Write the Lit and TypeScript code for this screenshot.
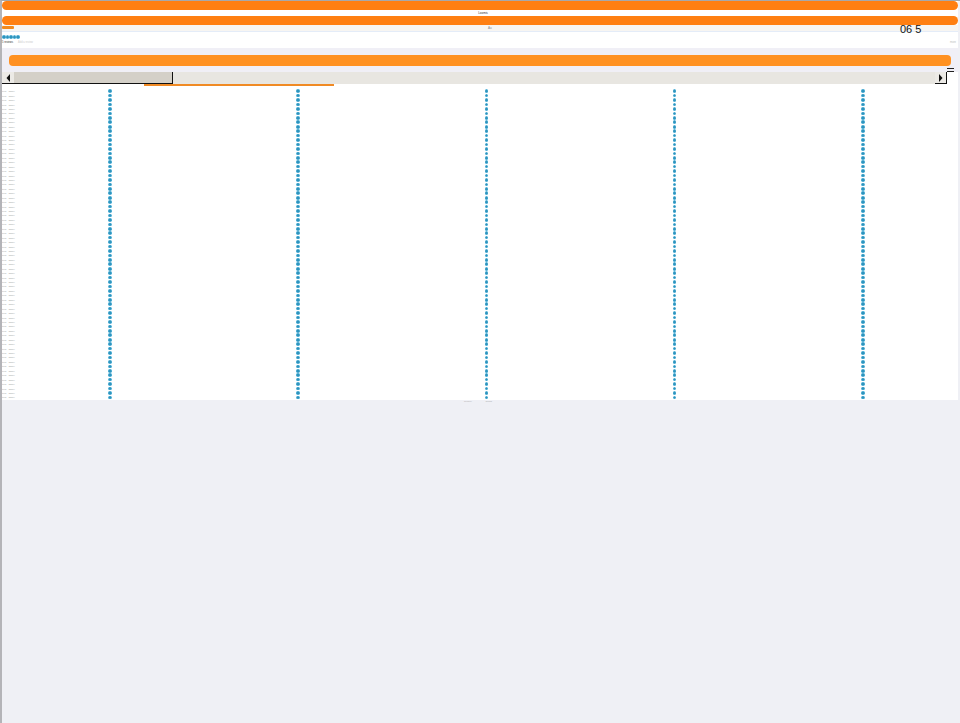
import { LitElement, html, css } from "lit";
import { customElement } from "lit/decorators.js";

const ROWS = Array.from({ length: 70 }, (_, i) => i);
const COLS = [0, 1, 2, 3, 4];

@customElement("app-root")
export class AppRoot extends LitElement {
  static styles = css`
    :host { display: block; width: 960px; height: 723px; background: #eff0f5; font-family: "Liberation Sans", Arial, sans-serif; overflow: hidden; position: relative; }
    .frame { height: 723px; border-left: 2px solid #b4b4b8; border-top: 1px solid #a8a8a8; box-sizing: border-box; width: 960px; }
    .page { width: 956px; height: 399px; background: #fff; display: flex; flex-direction: column; position: relative; }
    .bar { height: 9px; background: #ff7f11; border-radius: 5px; flex: none; }
    .caption { height: 6px; flex: none; display: flex; justify-content: center; align-items: center; font-size: 3px; color: #333; padding-left: 6px; }
    .sub { height: 6px; flex: none; background: #f7f5f2; display: flex; position: relative; align-items: center; border-bottom: 1px solid #e4ecf8; box-sizing: content-box; }
    .pill { width: 12px; height: 3px; margin-top: 1px; background: #f28a1e; border-radius: 1px; align-self: flex-start; }
    .hint { font-size: 3px; color: #888; margin-left: 474px; }
    .time { position: absolute; left: 898px; top: -3px; font-size: 11px; line-height: 14px; color: #111; }
    .meta { height: 16px; flex: none; padding: 3px 0 0 0; box-sizing: border-box; }
    .stars { display: flex; height: 4px; }
    .dot { width: 3.6px; height: 3.6px; border-radius: 50%; background: radial-gradient(circle, #2f93bc 0 30%, #52b2d8 65%); flex: none; }
    .info { font-size: 2.6px; line-height: 4px; color: #333; margin-top: 2px; display: flex; }
    .info span + span { color: #ccc; margin-left: 5px; }
    .info i { font-style: normal; margin-left: auto; color: #bbb; padding-right: 2px; }
    .banner { height: 24px; flex: none; background: #f0eff6; padding: 7px 7px 0 7px; box-sizing: border-box; }
    .banner div { height: 11px; border-radius: 4px; background: #ff9122; width: 942px; }
    .scroll { height: 12px; flex: none; width: 945px; background: #e8e6e1; display: flex; box-sizing: border-box; position: relative; }
    .btn { width: 12px; flex: none; background: #eceae6; display: flex; align-items: center; justify-content: center; }
    .btn svg { display: block; }
    .thumb { width: 159px; flex: none; background: #d4d0c8; border-right: 1.5px solid #111; box-sizing: border-box; }
    .left { display: flex; border-bottom: 1.5px solid #111; }
    .space { flex: 1; }
    .rb { border-right: 1.5px solid #111; border-bottom: 1.5px solid #111; box-sizing: border-box; width: 12px; }
    .menu { position: absolute; left: 945px; top: 67px; width: 7px; height: 4px; border-top: 1px solid #222; border-bottom: 1px solid #222; box-sizing: border-box; }
    .tabs { height: 5px; flex: none; position: relative; }
    .tab { height: 2px; width: 190px; margin-left: 142px; background: #f08a24; }
    .grid { flex: 1; overflow: hidden; display: grid; grid-auto-rows: 4.45px; }
    .row { display: flex; align-items: center; height: 4.45px; }
    .label { width: 106.2px; flex: none; font-size: 2.2px; color: #999; white-space: nowrap; }
    .label span { margin-left: 2.5px; }
    .cell { width: 188.2px; flex: none; }
    .footer { position: absolute; left: 462px; top: 399px; font-size: 2.4px; color: #aaa; white-space: nowrap; word-spacing: 13px; }
  `;

  render() {
    return html`
      <div class="frame">
        <div class="page">
          <div class="bar"></div>
          <div class="caption">Loomis</div>
          <div class="bar"></div>
          <div class="sub"><div class="pill"></div><div class="hint">Au</div><div class="time">06 5</div></div>
          <div class="meta">
            <div class="stars">${COLS.map(() => html`<div class="dot"></div>`)}</div>
            <div class="info"><span>5 reviews</span><span>Add a review</span><i>more</i></div>
          </div>
          <div class="banner"><div></div></div>
          <div class="scroll">
            <div class="left">
              <div class="btn"><svg width="5" height="8" viewBox="0 0 5 8"><path d="M4 0 L0.5 4 L4 8Z" fill="#111"/></svg></div>
              <div class="thumb"></div>
            </div>
            <div class="space"></div>
            <div class="btn rb"><svg width="5" height="8" viewBox="0 0 5 8"><path d="M1 0 L4.5 4 L1 8Z" fill="#111"/></svg></div>
          </div>
          <div class="menu"></div>
          <div class="tabs"><div class="tab"></div></div>
          <div class="grid">
            ${ROWS.map(() => html`
              <div class="row">
                <div class="label">Item<span>Name</span></div>
                ${COLS.map(() => html`<div class="cell"><div class="dot"></div></div>`)}
              </div>`)}
          </div>
          <div class="footer">Privacy Terms</div>
        </div>
      </div>
    `;
  }
}
